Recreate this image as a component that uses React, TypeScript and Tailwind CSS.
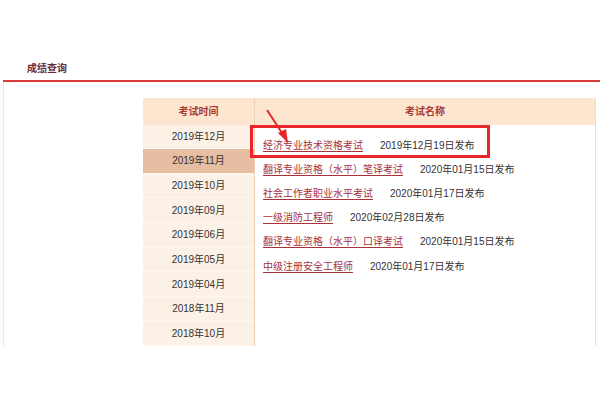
const months = [
  '2019年12月',
  '2019年11月',
  '2019年10月',
  '2019年09月',
  '2019年06月',
  '2019年05月',
  '2019年04月',
  '2018年11月',
  '2018年10月',
];

const exams = [
  { name: '经济专业技术资格考试', date: '2019年12月19日发布' },
  { name: '翻译专业资格（水平）笔译考试', date: '2020年01月15日发布' },
  { name: '社会工作者职业水平考试', date: '2020年01月17日发布' },
  { name: '一级消防工程师', date: '2020年02月28日发布' },
  { name: '翻译专业资格（水平）口译考试', date: '2020年01月15日发布' },
  { name: '中级注册安全工程师', date: '2020年01月17日发布' },
];

export default function App() {
  return (
    <div
      className="relative h-[400px] w-[600px] overflow-hidden bg-white"
      style={{ fontFamily: '"Liberation Sans", "Noto Sans CJK SC", sans-serif' }}
    >
      <div className="h-[56px]" />
      <div className="flex h-[24px] items-center pl-[27px] text-[10px] font-bold text-[#6b2b33]">成绩查询</div>
      <div className="ml-[3px] h-[2px] bg-[#d83a3a]" />
      <div className="ml-[3px] flex h-[264px] border-l border-[#f3e6e2] pt-[16px]">
        <div className="ml-[139px] flex w-[453px] border-r border-[#eedccf]">
          <div className="flex w-[112px] flex-col border-r border-[#f0cfb4] bg-[#fcf1e7]">
            <div className="flex h-[27px] items-center justify-center bg-[#fde6d0] text-[10px] font-bold text-[#a83a32]">
              考试时间
            </div>
            {months.map((m, i) => (
              <div
                key={m}
                className={`flex h-[25px] items-center justify-center border-b border-[#fff8f2] text-[10px] text-[#333] ${
                  i === 1 ? 'bg-[#e8bea2]' : ''
                }`}
              >
                {m}
              </div>
            ))}
          </div>
          <div className="flex flex-1 flex-col">
            <div className="flex h-[27px] items-center justify-center bg-[#fde6d0] text-[10px] font-bold text-[#a83a32]">
              考试名称
            </div>
            <div className="flex flex-col pl-[8px] pt-[8px]">
              {exams.map((e) => (
                <div key={e.name} className="flex h-[24.2px] items-center text-[10px]">
                  <span className="text-[#a8323a] underline underline-offset-2">{e.name}</span>
                  <span className="ml-[17px] text-[#333]">{e.date}</span>
                </div>
              ))}
            </div>
          </div>
        </div>
      </div>

      <div className="absolute left-[250px] top-[125px] h-[33px] w-[240px] border-[3px] border-[#e8262a]" />
      <svg className="absolute left-[262px] top-[106px]" width="34" height="40" viewBox="0 0 34 40">
        <line x1="5" y1="4" x2="22" y2="30" stroke="#e8262a" strokeWidth="2" />
        <polygon points="26,37 16,27 24,23" fill="#e8262a" />
      </svg>
    </div>
  );
}
